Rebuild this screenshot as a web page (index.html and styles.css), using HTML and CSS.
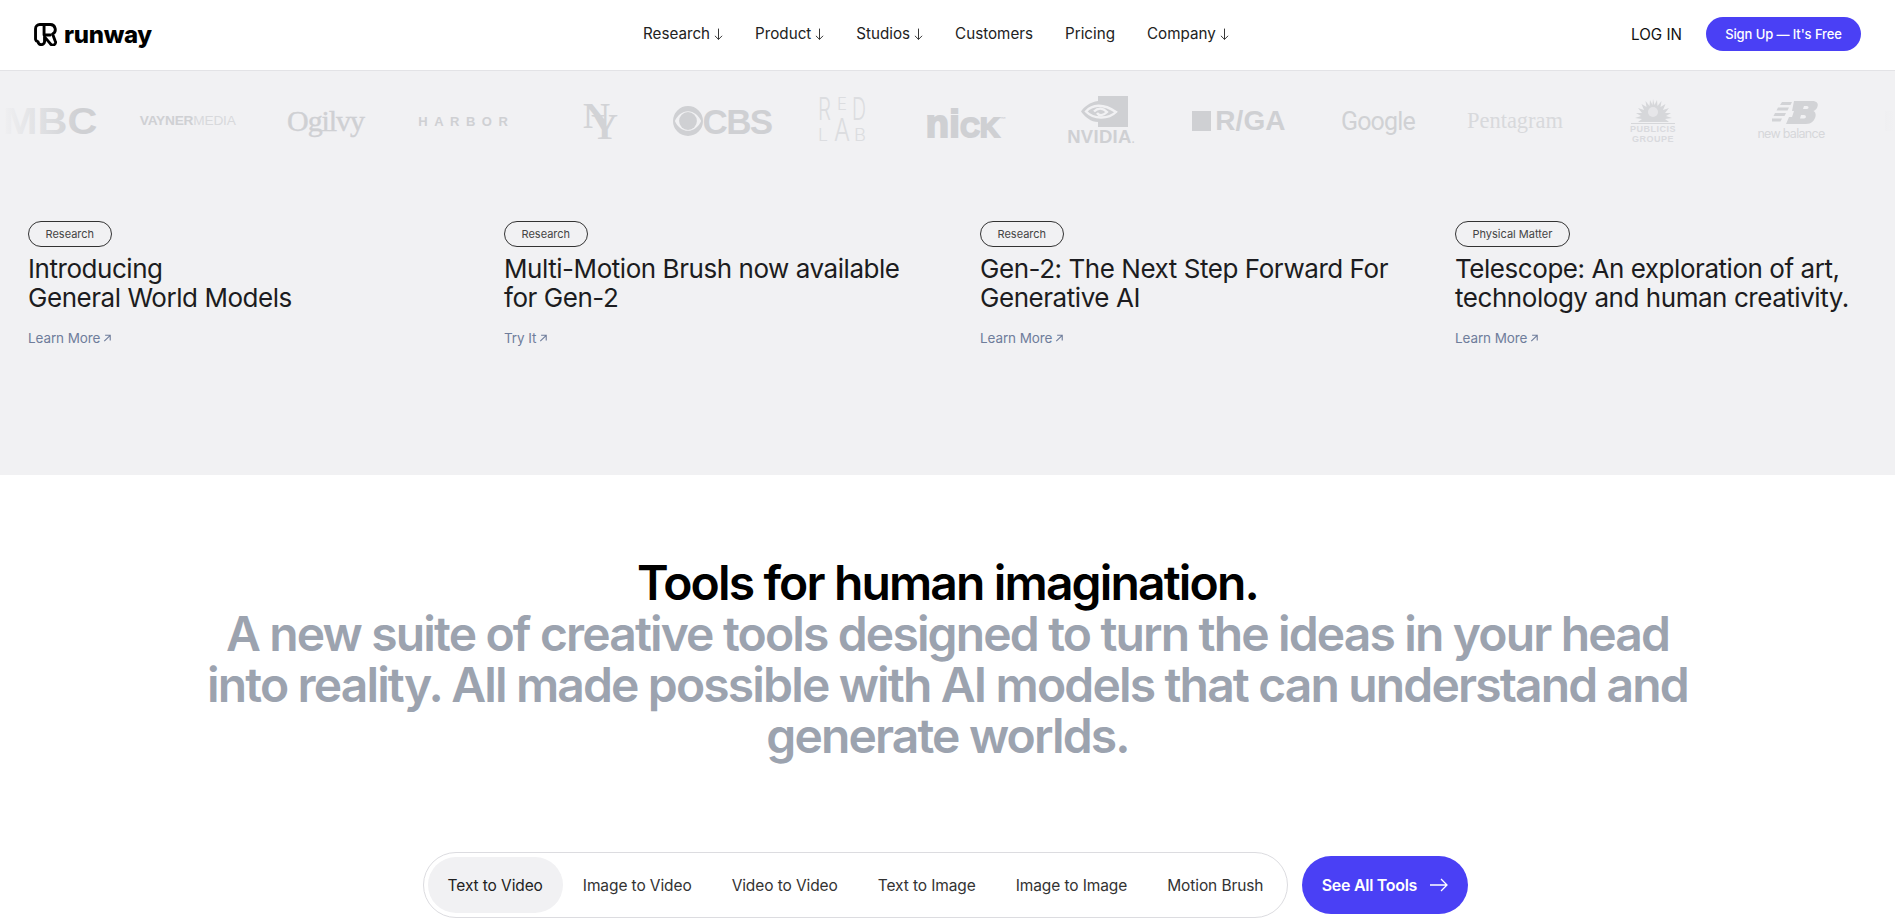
FILE: index.html
```html
<!DOCTYPE html>
<html lang="en">
<head>
<meta charset="utf-8">
<title>Runway</title>
<link rel="stylesheet" href="styles.css">
</head>
<body>
<header class="topbar">
  <a class="brand">
    <svg class="brand-mark" viewBox="0 0 24 24" fill="none" stroke="#000" stroke-width="3" stroke-linejoin="round" stroke-linecap="round"><path d="M6 1.600h11a5.200 5.200 0 0 1 2.400 9.800L22 18.500a2.900 2.900 0 0 1-4.800 3.300L11 14.500V19a3.400 3.400 0 0 1-6.800.4A3 3 0 0 1 1.600 17V6A4.400 4.400 0 0 1 6 1.600z"/><path d="M10.500 1.600V12.500h6.500"/></svg>
    <span class="brand-name">runway</span>
  </a>
  <nav class="mainnav">
    <a class="navlink">Research <svg class="down" viewBox="0 0 10 14"><path d="M5 1v12M1 9l4 4 4-4"/></svg></a>
    <a class="navlink">Product <svg class="down" viewBox="0 0 10 14"><path d="M5 1v12M1 9l4 4 4-4"/></svg></a>
    <a class="navlink">Studios <svg class="down" viewBox="0 0 10 14"><path d="M5 1v12M1 9l4 4 4-4"/></svg></a>
    <a class="navlink">Customers</a>
    <a class="navlink">Pricing</a>
    <a class="navlink">Company <svg class="down" viewBox="0 0 10 14"><path d="M5 1v12M1 9l4 4 4-4"/></svg></a>
  </nav>
  <div class="auth">
    <a class="login">LOG IN</a>
    <a class="signup">Sign Up — It's Free</a>
  </div>
</header>

<section class="hero-band">
  <div class="logos">
    <div class="logo"><span class="l-mbc">MBC</span></div>
    <div class="logo"><span class="l-vayner"><b>VAYNER</b>MEDIA</span></div>
    <div class="logo"><span class="l-ogilvy">Ogilvy</span></div>
    <div class="logo"><span class="l-harbor">HARBOR</span></div>
    <div class="logo">
      <svg class="l-ny" viewBox="0 -8 36 56">
        <text x="0" y="27" font-size="36" textLength="27" lengthAdjust="spacingAndGlyphs">N</text>
        <text x="8" y="38" font-size="36" textLength="27" lengthAdjust="spacingAndGlyphs">Y</text>
      </svg>
    </div>
    <div class="logo l-cbs-wrap">
      <svg class="eye" viewBox="0 0 32 32"><path fill-rule="evenodd" d="M16 0a16 16 0 1 1 0 32 16 16 0 0 1 0-32zM16 5.500C10 5.500 4.500 10 2 16c2.500 6 8 10.500 14 10.500S27.500 22 30 16C27.500 10 22 5.500 16 5.500z"/><circle cx="16" cy="16" r="9.500"/></svg>
      <span class="l-cbs">CBS</span>
    </div>
    <div class="logo">
      <svg class="l-red" viewBox="0 -12 48 72">
        <text x="0" y="23" font-size="31" textLength="13" lengthAdjust="spacingAndGlyphs">R</text>
        <text x="19" y="13" font-size="17" textLength="10" lengthAdjust="spacingAndGlyphs">E</text>
        <text x="34" y="23" font-size="31" textLength="14" lengthAdjust="spacingAndGlyphs">D</text>
        <text x="0" y="44" font-size="17" textLength="10" lengthAdjust="spacingAndGlyphs">L</text>
        <text x="16" y="44" font-size="31" textLength="16" lengthAdjust="spacingAndGlyphs">A</text>
        <text x="36" y="44" font-size="17" textLength="12" lengthAdjust="spacingAndGlyphs">B</text>
      </svg>
    </div>
    <div class="logo"><span class="l-nick">ni<span class="l-ck">ck</span><i>™</i></span></div>
    <div class="logo l-nvidia-wrap">
      <svg class="nv" viewBox="0 0 47 31">
        <path class="nv-fill" d="M17 0h30v31H17v-5C10 26 4 21 0 15.500 3 11 9 6 17 5z"/>
        <path class="nv-cut" d="M5 15.500C11 8.500 22 7 35 16 28 23 13 24 5 15.500z"/>
        <path class="nv-cut" d="M13 15.500C17 11.500 22 12 26 16 22 20 18 20 16 17"/>
      </svg>
      <span class="l-nvidia">NVIDIA<small>.</small></span>
    </div>
    <div class="logo l-rga-wrap"><i class="rga-box"></i><span class="l-rga">R/GA</span></div>
    <div class="logo"><span class="l-google">Google</span></div>
    <div class="logo"><span class="l-pent">Pentagram</span></div>
    <div class="logo l-pub-wrap">
      <svg class="sun" viewBox="0 0 44 25"><path d="M22 0l1.500 6 2.500-5 .5 6 4-5-1 6 5-3-2.500 6 6-2-4 5 6 0-5 3 6 2-7 1 4 3H7l4-3-7-1 6-2-5-3 6 0-4-5 6 2-2.500-6 5 3-1-6 4 5 .5-6 2.500 5z"/><circle class="sun-cut" cx="22" cy="13" r="5"/><path d="M0 24h44v1H0z"/></svg>
      <span class="l-pub">PUBLICIS<br>GROUPE</span>
    </div>
    <div class="logo l-nb-wrap">
      <svg class="nb" viewBox="0 0 46 23"><path d="M10 1h10l-1.500 3H8zM6 6.500h11l-1.500 3H4.500zM3 12h11l-1.500 3H1.500zM0 17.500h10l-1.500 3H0zM22 0h18c5 0 6.500 2.500 5.500 5.500-.5 2-2 3.500-4 4.500 1.800 1 2.500 3 2 5.500-1 4-4 7.500-9.500 7.500H14l3-7 3 0 2-6-2 0zM32 5l-1 3h4c2 0 2-3 0-3zM29 14l-1 3.500h4c2.500 0 2.500-3.500 0-3.500z" fill-rule="evenodd"/></svg>
      <span class="l-nbt">new balance</span>
    </div>
    <div class="logo"><i class="l-next"></i></div>
  </div>

  <div class="news">
    <article class="story">
      <span class="tag">Research</span>
      <h3>Introducing<br>General World Models</h3>
      <a class="more">Learn More <svg class="ne" viewBox="0 0 10 10"><path d="M1.500 8.500l7-7M2.500 1.500h6v6"/></svg></a>
    </article>
    <article class="story">
      <span class="tag">Research</span>
      <h3>Multi-Motion Brush now available<br>for Gen-2</h3>
      <a class="more">Try It <svg class="ne" viewBox="0 0 10 10"><path d="M1.500 8.500l7-7M2.500 1.500h6v6"/></svg></a>
    </article>
    <article class="story">
      <span class="tag">Research</span>
      <h3>Gen-2: The Next Step Forward For<br>Generative AI</h3>
      <a class="more">Learn More <svg class="ne" viewBox="0 0 10 10"><path d="M1.500 8.500l7-7M2.500 1.500h6v6"/></svg></a>
    </article>
    <article class="story">
      <span class="tag">Physical Matter</span>
      <h3>Telescope: An exploration of art,<br>technology and human creativity.</h3>
      <a class="more">Learn More <svg class="ne" viewBox="0 0 10 10"><path d="M1.500 8.500l7-7M2.500 1.500h6v6"/></svg></a>
    </article>
  </div>
</section>

<section class="tools">
  <h1 class="pitch">Tools for human imagination.<br><span>A new suite of creative tools designed to turn the ideas in your head<br>into reality. All made possible with AI models that can understand and<br>generate worlds.</span></h1>
  <div class="toolbar">
    <div class="tabs">
      <a class="tab active">Text to Video</a>
      <a class="tab">Image to Video</a>
      <a class="tab">Video to Video</a>
      <a class="tab">Text to Image</a>
      <a class="tab">Image to Image</a>
      <a class="tab">Motion Brush</a>
    </div>
    <a class="see-all">See All Tools <svg class="right" viewBox="0 0 20 14"><path d="M1 7h17M12 1l6 6-6 6"/></svg></a>
  </div>
</section>
</body>
</html>
```
FILE: styles.css
```css
* { box-sizing: border-box; }
html, body { margin: 0; padding: 0; height: 923px; overflow: hidden; background: #fff; }
body { font-family: Inter, "Liberation Sans", sans-serif; color: #111; }
a { color: inherit; text-decoration: none; }

.topbar { height: 71px; border-bottom: 1px solid #e3e3e6; display: grid; grid-template-columns: 609px auto 1fr; align-items: center; padding: 0 34px 2px; }
.brand { display: flex; align-items: center; gap: 7px; }
.brand-mark { width: 23px; height: 23px; }
.brand-name { font-size: 24px; font-weight: 800; color: #000; letter-spacing: -.3px; line-height: 23px; }
.mainnav { display: flex; gap: 32px; }
.navlink { font-size: 15.200px; color: #222; display: flex; align-items: center; gap: 4px; line-height: 20px; }
.down { width: 9px; height: 14px; fill: none; stroke: #222; stroke-width: 1; }
.auth { display: flex; justify-content: flex-end; align-items: center; gap: 24px; }
.login { font-size: 15.200px; color: #111; }
.signup { height: 34px; width: 155px; border-radius: 17px; background: #4a40f5; color: #fff; font-size: 13px; font-weight: 500; display: flex; align-items: center; justify-content: center; letter-spacing: -.1px; }

.hero-band { height: 404px; background: #f1f1f3; overflow: hidden; }
.logos { display: grid; grid-template-columns: repeat(5, 137.800px) 104px 136px 112px 158px 118px 160px 114px 162px 114px 84px; height: 100px; margin-left: -19px; align-items: center; color: #cfd0d3; position: relative; }
.logos::before, .logos::after { content: ""; position: absolute; top: 0; bottom: 0; z-index: 1; }
.logos::before { left: 19px; width: 80px; background: linear-gradient(90deg, #f1f1f3, rgba(241,241,243,0)); }
.logos::after { left: 1864px; width: 50px; background: linear-gradient(270deg, #f1f1f3, rgba(241,241,243,0)); }
.logo { height: 80px; display: flex; align-items: center; justify-content: center; }
.l-mbc { font: 700 37px/1 "Liberation Sans", sans-serif; transform: scaleX(1.120); }
.l-vayner { font: 400 13.700px/1 "Liberation Sans", sans-serif; color: #d8d9dc; letter-spacing: -.2px; }
.l-vayner b { color: #cfd0d3; }
.l-ogilvy { font: 400 30px/1 "Liberation Serif", serif; letter-spacing: -1.100px; -webkit-text-stroke: .4px #cfd0d3; }
.l-harbor { font: 700 13px/1 "Liberation Sans", sans-serif; letter-spacing: 6.500px; margin-right: -6px; }
.l-ny { width: 36px; height: 56px; }
.l-ny text { font-family: "Liberation Serif", serif; font-weight: 700; fill: #d2d3d6; }
.l-cbs-wrap { gap: 0; }
.eye { width: 30px; height: 30px; fill: #cfd0d3; flex: none; }
.l-cbs { font: 700 35px/1 "Liberation Sans", sans-serif; letter-spacing: -1.700px; }
.l-red { width: 48px; height: 72px; }
.l-red text { font-family: Inter, sans-serif; font-weight: 300; fill: #dcdde0; }
.l-nick { font: 700 38px/1 "Liberation Sans", sans-serif; -webkit-text-stroke: 2px #cfd0d3; letter-spacing: .3px; margin-top: 6px; }
.l-ck { font-variant: small-caps; }
.l-nick i { font-size: 6px; font-style: normal; vertical-align: 16px; -webkit-text-stroke: 0; }
.l-nvidia-wrap { flex-direction: column; gap: 3px; }
.nv { width: 47px; height: 31px; margin-left: 8px; }
.nv-fill { fill: #cfd0d3; }
.nv-cut { fill: none; stroke: #f1f1f3; stroke-width: 2.400; }
.l-nvidia { font: 700 18.500px/14px "Liberation Sans", sans-serif; color: #cfd0d3; letter-spacing: .3px; }
.l-nvidia small { font-size: 10px; }
.l-rga-wrap { gap: 4px; }
.rga-box { width: 19px; height: 20px; background: #cfd0d3; display: block; }
.l-rga { font: 700 28px/1 "Liberation Sans", sans-serif; letter-spacing: .1px; }
.l-google { font: 400 25px/1 Roboto, sans-serif; color: #d0d1d4; letter-spacing: -.8px; }
.l-pent { font: 400 22.500px/1 "Liberation Serif", serif; color: #d8d9dc; }
.l-pub-wrap { flex-direction: column; }
.sun { width: 44px; height: 25px; fill: #d6d7da; }
.sun-cut { fill: #e6e6e9; }
.l-pub { font: 700 9px/10px "Liberation Sans", sans-serif; text-align: center; color: #d9dade; letter-spacing: .5px; }
.l-nb-wrap { flex-direction: column; gap: 3px; }
.nb { width: 46px; height: 23px; fill: #d2d3d6; margin-left: 8px; }
.l-nbt { font: 400 12.500px/14px Inter, sans-serif; color: #d6d7da; letter-spacing: -.7px; }
.l-next { display: block; width: 9px; height: 20px; background: #e9e9ec; }

.news { display: grid; grid-template-columns: 476px 476px 475px 1fr; padding: 50px 0 0 28px; }
.story { display: flex; flex-direction: column; align-items: flex-start; }
.tag { height: 26px; padding: 0 16.500px; border: 1px solid #333; border-radius: 13px; font-size: 11px; color: #444; display: flex; align-items: center; }
.story h3 { margin: 7px 0 0; font-size: 26px; line-height: 29px; font-weight: 400; letter-spacing: -.45px; color: #1c1c20; }
.more { margin-top: 16px; font-size: 13.500px; line-height: 20px; color: #6f7d9b; letter-spacing: -.1px; display: flex; align-items: center; gap: 3px; }
.ne { width: 8.500px; height: 8.500px; fill: none; stroke: #6f7d9b; stroke-width: 1.300; }

.tools { display: flex; flex-direction: column; align-items: center; }
.pitch { margin: 82px 0 0; font-size: 48px; line-height: 51px; font-weight: 600; text-align: center; color: #000; letter-spacing: -1.850px; }
.pitch span { color: #9ca3af; }
.toolbar { margin: 91px 4px 0 0; display: flex; align-items: center; gap: 14px; }
.tabs { height: 66px; border: 1px solid #dcdce0; border-radius: 33px; padding: 4px; display: flex; }
.tab { padding: 0 20px; height: 56px; border-radius: 28px; display: flex; align-items: center; font-size: 15.500px; color: #333; letter-spacing: -.1px; }
.tab.active { background: #f1f1f3; color: #222; }
.see-all { width: 166px; height: 58px; border-radius: 29px; background: #4a40f5; color: #fff; font-size: 16px; font-weight: 600; display: flex; align-items: center; justify-content: center; gap: 12px; letter-spacing: -.3px; }
.right { width: 20px; height: 14px; fill: none; stroke: #fff; stroke-width: 1.300; }
```
